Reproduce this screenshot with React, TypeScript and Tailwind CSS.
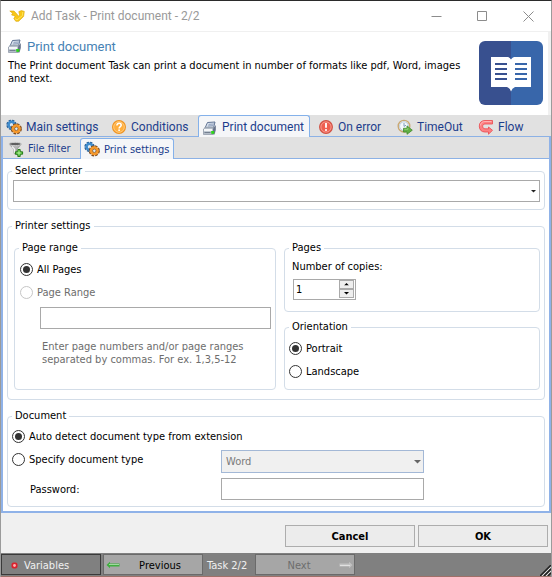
import type { ReactNode } from "react";

function GearsIcon() {
  return (
    <svg width="16" height="16" viewBox="0 0 16 16" aria-hidden="true">
      <circle cx="5.5" cy="5.8" r="3.700" fill="none" stroke="#2a5f96" strokeWidth="3" strokeDasharray="2.100 0.800" />
      <circle cx="5.5" cy="5.8" r="2.900" fill="none" stroke="#3f8ccd" strokeWidth="2.6" />
      <circle cx="5.500" cy="5.800" r="1.600" fill="#dfeaf4" />
      <circle cx="10.3" cy="9.8" r="4" fill="none" stroke="#7d4a1c" strokeWidth="3.200" strokeDasharray="2.240 0.900" />
      <circle cx="10.3" cy="9.8" r="3.1" fill="none" stroke="#f6982a" strokeWidth="2.900" />
      <circle cx="10.3" cy="9.8" r="1.7" fill="#dceaf6" stroke="#8a5a28" strokeWidth="0.8" />
    </svg>
  );
}

function QuestionIcon() {
  return (
    <svg width="16" height="16" viewBox="0 0 16 16" aria-hidden="true">
      <circle cx="8" cy="8" r="6.4" fill="#ffae3d" stroke="#ee9424" strokeWidth="1.2" />
      <circle cx="8" cy="8" r="5.3" fill="none" stroke="#ffd08a" strokeWidth="0.8" />
      <path d="M5.9 6.6C5.9 5 7 4.3 8.1 4.3S10.2 5 10.2 6.2C10.2 7.6 8.1 7.6 8.1 9.4" fill="none" stroke="#fff" strokeWidth="1.5" />
      <rect x="7.3" y="10.4" width="1.6" height="1.6" fill="#fff" />
    </svg>
  );
}

function PrinterIcon() {
  return (
    <svg width="16" height="16" viewBox="0 0 16 16" aria-hidden="true">
      <path d="M5.500 2.500L13 2 11.500 8H3z" fill="#dfe7f1" stroke="#4f6488" strokeWidth="0.9" />
      <path d="M6.500 4.300L12 4M5.800 6L11.400 5.700" stroke="#7d90b0" strokeWidth="0.9" />
      <path d="M1.500 9L3.500 7.200H12L10.500 9.500V14.500H1.500z" fill="#b4bdc9" stroke="#8a94a3" strokeWidth="0.7" />
      <path d="M10.500 9.500L13.800 5V10L12.500 14.500H10.500z" fill="#66728a" />
      <path d="M2 9H10.500V11.200H2z" fill="#f4f6f8" />
      <path d="M2.500 12.500H8.500" stroke="#747f90" strokeWidth="1" />
      <rect x="9.200" y="11" width="3" height="2.800" fill="#2fd61a" />
    </svg>
  );
}

function ErrorIcon() {
  return (
    <svg width="16" height="16" viewBox="0 0 16 16" aria-hidden="true">
      <circle cx="8" cy="8" r="6.4" fill="#ee5f50" stroke="#cf5346" strokeWidth="1.1" />
      <circle cx="8" cy="8" r="5.1" fill="none" stroke="#f9a79d" strokeWidth="0.8" />
      <path d="M8 4V8.8" stroke="#fff" strokeWidth="1.8" />
      <rect x="7.1" y="10.1" width="1.8" height="1.8" fill="#fff" />
    </svg>
  );
}

function ClockIcon() {
  return (
    <svg width="16" height="16" viewBox="0 0 16 16" aria-hidden="true">
      <circle cx="7" cy="7.2" r="5.8" fill="#f4f8fc" stroke="#c9a873" strokeWidth="1.4" />
      <circle cx="7" cy="7.2" r="4.4" fill="none" stroke="#a9bdd2" strokeWidth="0.8" />
      <path d="M7 4V7.400L9 6.200" fill="none" stroke="#7f9cbc" strokeWidth="1" />
      <path d="M6.5 9.3H10V6.9L15.3 11.2 10 15.3V13H6.5z" fill="#62b045" stroke="#3f8a2a" strokeWidth="0.8" />
      <path d="M7.4 10.3H10.9V8.9" fill="none" stroke="#a1dc86" strokeWidth="0.7" />
    </svg>
  );
}

function FlowIcon() {
  return (
    <svg width="16" height="16" viewBox="0 0 16 16" aria-hidden="true">
      <path
        d="M14.500 1.500H7C3.300 1.500 1.300 3.800 1.300 7.200S3.400 13 6.800 13H10.500V15.200L14.500 11.300 10.500 8V9.800H7C5.500 9.800 4.700 8.800 4.700 7.300S5.600 5 7 5H14.500z"
        fill="#fd8082"
        stroke="#ea484d"
        strokeWidth="0.8"
        strokeLinejoin="round"
      />
      <path d="M13.500 2.500H7C4.200 2.500 2.500 4.400 2.400 6.500" fill="none" stroke="#ffc0c0" strokeWidth="0.8" />
    </svg>
  );
}

function FunnelIcon() {
  return (
    <svg width="16" height="16" viewBox="0 0 16 16" aria-hidden="true">
      <path d="M1.500 3.500L6 8.500V12.500L8.500 13.500V8.500L13 3.500z" fill="#b4b4b4" stroke="#8a8a8a" strokeWidth="0.7" />
      <path d="M6.600 8V12.300M4 5.500L6.600 8.200" stroke="#f4f4f4" strokeWidth="1.200" />
      <ellipse cx="7.200" cy="3" rx="6.200" ry="1.700" fill="#5f5f5f" stroke="#d2d2d2" strokeWidth="1" />
      <path d="M9.800 8.500H12.200V10.800H14.600V13.200H12.200V15.500H9.800V13.200H7.400V10.800H9.800z" fill="#4fc52f" stroke="#1d7012" strokeWidth="0.9" />
      <path d="M11 9.600V14.400M8.600 12H13.400" stroke="#c6f5b5" strokeWidth="0.8" />
    </svg>
  );
}

function AppLogo() {
  return (
    <svg width="16" height="12" viewBox="0 0 16 12" aria-hidden="true">
      <path d="M0.8 1H5L8 4.2 9.5 6.2 10.6 5 9.8 1.6 12.5 0.6 15.3 1.4 14.6 6.5 9.6 11.3H6.8L4.8 8.5 6.2 6.5 4.4 5.4 2.6 5 3.6 3.2z" fill="#f8c717" stroke="#d9a405" strokeWidth="0.6" />
      <path d="M6 8.6L8 10 13.5 5.5 13.8 2" fill="none" stroke="#ffe65c" strokeWidth="1" />
    </svg>
  );
}

function BookLogo() {
  return (
    <svg width="64" height="64" viewBox="0 0 64 64" aria-hidden="true">
      <path d="M32 0H6A6 6 0 0 0 0 6V58A6 6 0 0 0 6 64H32z" fill="#38508f" />
      <path d="M32 0H58A6 6 0 0 1 64 6V58A6 6 0 0 1 58 64H32z" fill="#3866aa" />
      <path d="M12 16H29Q31 16.500 32 18.500Q33 16.500 35 16H52V46H36Q33 47 32 50.500Q31 47 28 46H12z" fill="#fff" />
      <path d="M16 23H28M16 28H28M16 33H28M16 38H28" stroke="#38508f" strokeWidth="2" />
      <path d="M36 23H48M36 28H48M36 33H48M36 38H48" stroke="#3866aa" strokeWidth="2" />
    </svg>
  );
}

function ArrowIcon({ className }: { className: string }) {
  return (
    <svg width="14" height="8" viewBox="0 0 14 8" className={className} aria-hidden="true">
      <path d="M0.500 4L4 0.800V2.500H13.500V5.500H4V7.200z" fill="currentColor" />
      <path d="M3 3.500H13" stroke="#fff" strokeOpacity="0.500" />
    </svg>
  );
}

function Tab({ icon, label, active, className }: { icon: ReactNode; label: string; active?: boolean; className: string }) {
  return (
    <button
      type="button"
      role="tab"
      aria-selected={!!active}
      className={`flex shrink-0 items-center gap-1 whitespace-nowrap pl-[3px] text-[#1c3d8c] ${
        active ? "-mb-px rounded-t-[3px] border border-b-0 border-[#84b1ea] bg-[#f5f6f8] pb-px" : ""
      } ${className}`}
    >
      {icon}
      {label}
    </button>
  );
}

function Group({ title, className, children }: { title: string; className: string; children: ReactNode }) {
  return (
    <fieldset className={`min-w-0 rounded-[4px] border border-[#d3dde8] px-1 ${className}`}>
      <legend className="px-[3px] pb-[2px] leading-[13px]">{title}</legend>
      {children}
    </fieldset>
  );
}

function Radio({ name, label, checked, disabled }: { name: string; label: string; checked?: boolean; disabled?: boolean }) {
  return (
    <label className={`flex h-[23px] items-center gap-1 ${disabled ? "text-[#6d6d6d]" : ""}`}>
      <input
        type="radio"
        name={name}
        defaultChecked={checked}
        disabled={disabled}
        className="size-[13px] shrink-0 appearance-none rounded-full border border-[#333] bg-clip-content p-[2px] checked:bg-[#333] disabled:border-[#c6c6c6]"
      />
      {label}
    </label>
  );
}

function DownArrow({ className }: { className: string }) {
  return (
    <svg viewBox="0 0 8 4" className={`pointer-events-none absolute ${className}`} aria-hidden="true">
      <path d="M0 0H8L4 4z" fill="currentColor" />
    </svg>
  );
}

export default function App() {
  return (
    <div className="flex min-h-screen w-full flex-col border-x border-t border-x-[#9b9b9b] border-t-[#2b2b2b] bg-[#f0f0f0] font-['DejaVu_Sans_Condensed','DejaVu_Sans',sans-serif] text-[11px] leading-[13px] text-black">
      <header className="flex h-[31px] items-center border-b border-[#f0f0f0] bg-white pl-2 font-['Roboto',sans-serif] text-[12px] text-[#999]">
        <AppLogo />
        <h1 className="ml-[6px] flex-1">Add Task - Print document - 2/2</h1>
        <button type="button" aria-label="Minimize" className="flex h-full w-[46px] items-center justify-center">
          <svg width="11" height="11" viewBox="0 0 11 11"><path d="M0.500 5.500H10.500" stroke="#8c8c8c" /></svg>
        </button>
        <button type="button" aria-label="Maximize" className="flex h-full w-[46px] items-center justify-center">
          <svg width="10" height="10" viewBox="0 0 10 10"><path d="M0.500 0.500H9.500V9.500H0.500z" fill="none" stroke="#8c8c8c" /></svg>
        </button>
        <button type="button" aria-label="Close" className="flex h-full w-[46px] items-center justify-center">
          <svg width="11" height="11" viewBox="0 0 11 11"><path d="M0.500 0.500L10.500 10.500M10.500 0.500L0.500 10.500" stroke="#8c8c8c" /></svg>
        </button>
      </header>

      <section className="mr-[3px] flex h-[83px] justify-between bg-white pt-[3px] pr-[5px] pl-[6px]">
        <div>
          <h2 className="flex h-[22px] items-center gap-1 font-['Roboto',sans-serif] text-[13px] text-[#4682b4]">
            <PrinterIcon />
            Print document
          </h2>
          <p className="px-px pt-[2px]">
            The Print document Task can print a document in number of formats like pdf, Word, images and text.
          </p>
        </div>
        <div className="shrink-0 pt-[6px] pl-2">
          <BookLogo />
        </div>
      </section>

      <nav role="tablist" aria-label="Task" className="flex h-[22px] border-b border-[#8cb1e5] bg-[#e1e1e1] pl-[2px] font-['Roboto',sans-serif] text-[12px]">
        <Tab icon={<GearsIcon />} label="Main settings" className="w-[105px] pt-[3px]" />
        <Tab icon={<QuestionIcon />} label="Conditions" className="w-[90px] pt-[3px]" />
        <Tab icon={<PrinterIcon />} label="Print document" active className="w-[112px] pt-[3px]" />
        <Tab icon={<ErrorIcon />} label="On error" className="ml-[5px] w-[79px] pt-[3px]" />
        <Tab icon={<ClockIcon />} label="TimeOut" className="w-[81px] pt-[3px]" />
        <Tab icon={<FlowIcon />} label="Flow" className="w-[60px] pt-[3px]" />
      </nav>

      <main className="border-x-2 border-b-2 border-[#8fb2e8] bg-white">
        <nav role="tablist" aria-label="Print document" className="flex h-[22px] border-b border-[#8cb1e5] bg-[#e1e1e1] pt-px pl-[2px]">
          <Tab icon={<FunnelIcon />} label="File filter" className="w-[75px] pt-px" />
          <Tab icon={<GearsIcon />} label="Print settings" active className="w-[94px] pt-px" />
        </nav>

        <div className="px-1 pt-[5px] pb-1">
          <Group title="Select printer" className="h-[46px]">
            <div className="relative mt-px ml-px">
              <select aria-label="Select printer" className="block h-[22px] w-full appearance-none border border-[#a9a9a9] bg-white px-1">
                <option></option>
              </select>
              <DownArrow className="top-[10px] right-[4px] w-[5px] text-[#222]" />
            </div>
          </Group>

          <Group title="Printer settings" className="mt-[9px] h-[181px]">
            <div className="mt-[7px] ml-[2px] grid grid-cols-[262fr_256fr] gap-2">
              <Group title="Page range" className="row-span-2">
                <div className="mt-[2px] ml-px">
                  <Radio name="range" label="All Pages" checked />
                  <Radio name="range" label="Page Range" disabled />
                </div>
                <input aria-label="Page Range" className="mt-[3px] ml-[21px] block h-[22px] w-[231px] border border-[#a9a9a9] px-1" />
                <p className="mt-[11px] ml-[23px] text-[#6d6d6d]">
                  Enter page numbers and/or page ranges
                  <br />
                  separated by commas. For ex. 1,3,5-12
                </p>
              </Group>
              <Group title="Pages" className="h-[71px]">
                <label htmlFor="copies" className="mt-1 ml-[3px] block">Number of copies:</label>
                <div className="mt-[6px] ml-1 flex h-[21px] w-[63px] border border-[#a9a9a9] pr-px">
                  <input id="copies" defaultValue="1" inputMode="numeric" className="w-full min-w-0 flex-1 px-[2px] pb-px" />
                  <div className="flex w-[15px] flex-col">
                    <button type="button" aria-label="More copies" className="relative h-[9px] border border-[#aaa] bg-[#eee]">
                      <DownArrow className="top-[2px] left-[4px] w-[5px] rotate-180" />
                    </button>
                    <button type="button" aria-label="Fewer copies" className="relative h-[9px] border border-[#aaa] bg-[#eee]">
                      <DownArrow className="top-[2px] left-[4px] w-[5px]" />
                    </button>
                  </div>
                </div>
              </Group>
              <Group title="Orientation" className="h-[70px]">
                <div className="mt-[2px]">
                  <Radio name="orientation" label="Portrait" checked />
                  <Radio name="orientation" label="Landscape" />
                </div>
              </Group>
            </div>
          </Group>

          <Group title="Document" className="mt-[9px] h-[98px]">
            <div className="mt-px">
              <Radio name="doctype" label="Auto detect document type from extension" checked />
            </div>
            <div className="grid grid-cols-[209px_203px]">
              <Radio name="doctype" label="Specify document type" />
              <div className="relative mt-[2px]">
                <select aria-label="Document type" disabled className="block h-[23px] w-full appearance-none border border-[#a3b8d6] bg-[#f0f0f0] px-1 text-[#7a7a7a]">
                  <option>Word</option>
                </select>
                <DownArrow className="top-[10px] right-[3px] w-[7px] text-[#666]" />
              </div>
              <label htmlFor="password" className="mt-[10px] ml-[18px]">Password:</label>
              <input id="password" type="password" className="mt-[5px] h-[22px] border border-[#a9a9a9] px-1" />
            </div>
          </Group>
        </div>
      </main>

      <div className="flex flex-1 justify-end gap-[3px] pt-3 pr-[3px] pb-[6px]">
        <button type="button" className="h-[22px] w-[130px] border border-[#adadad] bg-[#ececec] font-bold">Cancel</button>
        <button type="button" className="h-[22px] w-[130px] border border-[#adadad] bg-[#ececec] font-bold">OK</button>
      </div>

      <footer className="relative flex h-6 items-center border-b border-[#a07068] bg-[#808080]">
        <button type="button" className="flex h-[21px] w-[100px] items-center border border-[#3a3a3a] pt-px pl-[9px] text-[#f0f0f0]">
          <svg width="7" height="7" viewBox="0 0 7 7" className="mr-[6px]" aria-hidden="true">
            <rect x="0.500" y="0.500" width="6" height="6" rx="2" fill="#d9222e" />
            <circle cx="3.500" cy="3.500" r="1.400" fill="#ffb0b0" />
          </svg>
          Variables
        </button>
        <button type="button" className="relative ml-[2px] h-[21px] w-[100px] border border-[#6a6a6a] bg-[#a6a6a6] pt-px pl-[14px]">
          <ArrowIcon className="absolute top-[6px] left-[2px] text-[#3fae3f]" />
          Previous
        </button>
        <span className="ml-1 w-12 pt-px text-[#f0f0f0]">Task 2/2</span>
        <button type="button" disabled className="relative h-[21px] w-[100px] border border-[#6a6a6a] bg-[#a6a6a6] pt-px pr-3 text-[#6d6d6d]">
          Next
          <ArrowIcon className="absolute top-[6px] right-[1px] rotate-180 text-[#c2c2c2]" />
        </button>
        <svg width="11" height="11" viewBox="0 0 11 11" className="absolute right-0 bottom-0" aria-hidden="true">
          <path d="M0 11L11 0M4 11L11 4M8 11L11 8" stroke="#222" strokeWidth="1.500" />
          <path d="M2 11L11 2M6 11L11 6" stroke="#ddd" />
        </svg>
      </footer>
    </div>
  );
}
